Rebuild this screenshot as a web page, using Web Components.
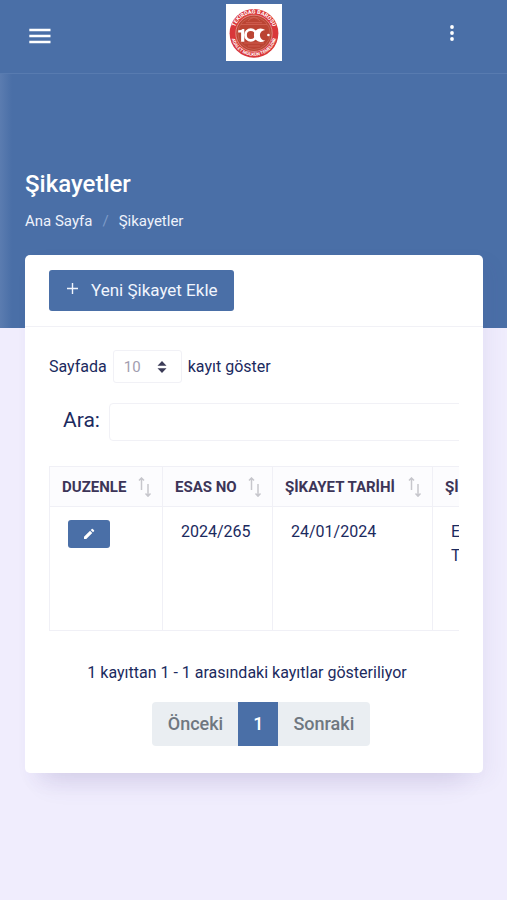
<!DOCTYPE html>
<html lang="tr">
<head>
<meta charset="utf-8">
<meta name="viewport" content="width=device-width, initial-scale=1">
<title>Şikayetler</title>
<style>
  :root { --blue: #4a6fa7; --navy: #1b2a5e; --line: #f1f1f6; --page: #f0edfd; }
  body { margin: 0; min-height: 100vh; background: var(--page); color: var(--navy);
    font: 16px/24px Roboto, "Noto Sans", sans-serif; }
</style>
</head>
<body>
<app-shell>
  <app-bar slot="bar"></app-bar>
  <page-title slot="title" heading="Şikayetler"></page-title>
  <content-card>
    <add-button slot="header">Yeni Şikayet Ekle</add-button>
    <data-controls></data-controls>
    <complaint-table></complaint-table>
    <table-pager></table-pager>
  </content-card>
</app-shell>

<script>
const define = (name, html) => {
  const template = document.createElement('template');
  template.innerHTML = '<style>:host{display:block;box-sizing:border-box}*{box-sizing:border-box}button,input,select{font:inherit;margin:0}</style>' + html;
  customElements.define(name, class extends HTMLElement {
    constructor() {
      super();
      this.attachShadow({ mode: 'open' }).append(template.content.cloneNode(true));
    }
    connectedCallback() {
      const heading = this.getAttribute('heading');
      if (heading) this.shadowRoot.querySelectorAll('[data-heading]').forEach(n => n.textContent = heading);
    }
  });
};

define('app-shell', `
<style>
  .top { background: linear-gradient(90deg, #5b7cb0, transparent 12px) 0 74px no-repeat, var(--blue); padding-bottom: 95px; }
  main { margin: -73px 24px 0 25px; }
</style>
<div class="top"><slot name="bar"></slot><slot name="title"></slot></div>
<main><slot></slot></main>`);

define('app-bar', `
<style>
  header { display: grid; grid-template-columns: 1fr auto 1fr; align-items: center; height: 74px; padding: 0 28px 8px; border-bottom: 1px solid #587bb0; }
  button { display: flex; padding: 0; border: 0; background: none; color: #fff; }
  button:last-child { justify-self: end; justify-content: center; width: 54px; }
  svg { display: block; }
  .menu { padding-top: 6px; }
</style>
<header>
  <button class="menu" aria-label="Menü"><svg width="24" height="24" viewBox="0 0 24 24" stroke="#fff" stroke-width="2.6"><path d="M1.300 6H22.500M1.300 12H22.500M1.300 18H22.500"/></svg></button>
  <svg width="56" height="57" viewBox="0 0 56 57" role="img" aria-label="Tekirdağ Barosu">
    <rect width="56" height="57" fill="#fff"/>
    <circle cx="28" cy="29.3" r="24.4" fill="#d9373a"/>
    <circle cx="28" cy="29.3" r="18.2" fill="#bb4433" stroke="#ecaaa0" stroke-width=".7"/>
    <circle cx="28" cy="29.3" r="16.2" fill="none" stroke="#d0705e" stroke-width=".6"/>
    <path d="M15 20.5h26M20 18.7h16M22 17q6-7 12 0M18 39h20M22 42h12" fill="none" stroke="#d46355" stroke-width=".8"/>
    <path id="up" d="M8.520 33.430a19.900 19.900 0 1 1 38.960 0" fill="none"/>
    <path id="down" d="M5.300 26a22.900 22.900 0 1 0 45.400 0" fill="none"/>
    <g fill="#fff" font-family="Roboto, sans-serif" font-weight="700" text-anchor="middle">
      <text font-size="5.500"><textPath href="#up" startOffset="50%">TEKİRDAĞ BAROSU</textPath></text>
      <text font-size="4.500"><textPath href="#down" startOffset="50%">ADALET MÜLKÜN TEMELİDİR</textPath></text>
    </g>
    <path d="M12.200 26.200q3.200.2 4.300-1.200h1.800v12.800h-3.200v-9.200h-2.900z" fill="#fff"/>
    <circle cx="24.800" cy="31" r="5.300" fill="none" stroke="#fff" stroke-width="2.700"/>
    <path d="M39.100 26a6.800 6.800 0 1 0 0 10.400a5.200 5.200 0 1 1 0-10.400z" fill="#fff"/>
    <circle cx="42.400" cy="31" r="1.300" fill="#fff"/>
  </svg>
  <button aria-label="Diğer seçenekler"><svg width="24" height="24" viewBox="0 0 24 24" fill="#fff"><circle cx="12" cy="6" r="1.900"/><circle cx="12" cy="12" r="1.900"/><circle cx="12" cy="18" r="1.900"/></svg></button>
</header>`);

define('page-title', `
<style>
  :host { padding: 96px 24px 0 25px; color: #fff; }
  h1 { margin: 0 0 11px; font-size: 24px; line-height: 28px; font-weight: 500; }
  ol { display: flex; gap: 10px; margin: 0; padding: 0; list-style: none; font-size: 15px; line-height: 24px; color: #eef2fb; }
  a { color: inherit; text-decoration: none; }
  .sep { color: #7e9bc8; }
</style>
<h1 data-heading></h1>
<nav aria-label="Sayfa yolu"><ol><li><a href="#">Ana Sayfa</a></li><li class="sep" aria-hidden="true">/</li><li data-heading></li></ol></nav>`);

define('content-card', `
<style>
  :host { background: #fff; border-radius: 5px; box-shadow: 0 28px 24px -20px rgba(82,63,140,.14), 8px 8px 20px rgba(82,63,140,.05); }
  header { padding: 15px 24px; border-bottom: 1px solid var(--line); }
  .body { padding: 23px 24px 27px; }
</style>
<header><slot name="header"></slot></header>
<div class="body"><slot></slot></div>`);

define('add-button', `
<style>
  button { display: flex; align-items: center; gap: 11px; padding: 0 16px 1px; height: 41px; border: 0; border-radius: 3px; background: var(--blue); color: #f1f5fd; font-size: 17px; line-height: 24px; }
  svg { display: block; margin-bottom: 3px; }
</style>
<button><svg width="15" height="15" viewBox="0 0 15 15" stroke="currentColor" stroke-width="1.4" aria-hidden="true"><path d="M7.500 2v11M2 7.500h11"/></svg><span><slot></slot></span></button>`);

define('data-controls', `
<style>
  :host { overflow: hidden; }
  .length { display: flex; align-items: center; gap: 6px; line-height: 32px; }
  .select { display: grid; align-items: center; }
  .select > * { grid-area: 1 / 1; }
  select { appearance: none; width: 69px; height: 33px; padding: 0 10px; border: 1px solid var(--line); border-radius: 3px; background: #fff; color: #a29daf; font-size: 15px; }
  svg { justify-self: end; margin-right: 15px; pointer-events: none; }
  .search { display: flex; align-items: center; gap: 9px; width: calc(100% + 40px); margin-top: 20px; padding-left: 14px; }
  .search label { padding-bottom: 4px; font-size: 21px; line-height: 32px; }
  input { flex: 1; min-width: 0; height: 38px; padding: 0 12px; border: 1px solid var(--line); border-radius: 4px; background: #fff; color: inherit; }
</style>
<div class="length"><label for="len">Sayfada</label>
  <span class="select"><select id="len" aria-label="Sayfada kayıt göster"><option>10</option></select>
  <svg width="10" height="12" viewBox="0 0 10 12" fill="#3b3b57" aria-hidden="true"><path d="M5 0l4.500 4.800h-9zM5 12L.5 7.200h9z"/></svg></span>
  <span>kayıt göster</span></div>
<div class="search"><label for="q">Ara:</label><input id="q" type="search"></div>`);

define('sort-icon', `
<style>:host{display:inline-block} svg{display:block}</style>
<svg width="14" height="20" viewBox="0 0 14 20" fill="none" stroke="#c6c6cc" stroke-width="1.500" aria-hidden="true"><path d="M3.500 13V1M1 3.600L3.500 1L6 3.600M10 7v12M7.500 16.600L10 19.200l2.500-2.600"/></svg>`);

define('complaint-table', `
<style>
  :host { margin-top: 25px; overflow-x: auto; scrollbar-width: none; }
  table { width: 580px; table-layout: fixed; border-collapse: collapse; }
  .c1 { width: 113px } .c2 { width: 110px } .c3 { width: 160px }
  th, td { border: 1px solid #f0f0f6; text-align: left; }
  th { height: 40px; padding: 0 10px 0 12px; background: #fcfcfe; color: #3c3558; font-size: 15px; line-height: 20px; font-weight: 700; white-space: nowrap; }
  th > span { display: flex; align-items: center; justify-content: space-between; }
  td { height: 124px; padding: 13px 18px; vertical-align: top; }
  button { display: grid; place-items: center; width: 42px; height: 28px; padding: 0; border: 0; border-radius: 3px; background: var(--blue); }
</style>
<table>
  <colgroup><col class="c1"><col class="c2"><col class="c3"><col></colgroup>
  <thead><tr>
    <th><span>DUZENLE<sort-icon></sort-icon></span></th>
    <th><span>ESAS NO<sort-icon></sort-icon></span></th>
    <th><span>ŞİKAYET TARİHİ<sort-icon></sort-icon></span></th>
    <th>Şİ</th>
  </tr></thead>
  <tbody><tr>
    <td><button aria-label="Düzenle"><svg width="12" height="12" viewBox="0 0 24 24" fill="#fff"><path d="M2 17.500V22h4.500L18.600 9.900l-4.500-4.500zM22 6.500a1.500 1.500 0 0 0 0-2.100l-2.400-2.400a1.500 1.500 0 0 0-2.100 0l-2 2 4.500 4.500z"/></svg></button></td>
    <td>2024/265</td>
    <td>24/01/2024</td>
    <td>E<br>T</td>
  </tr></tbody>
</table>`);

define('table-pager', `
<style>
  :host { margin-top: 30px; }
  p { margin: 0; padding-right: 14px; text-align: center; }
  nav { display: flex; justify-content: center; margin-top: 17px; padding-left: 14px; }
  button { height: 44px; padding: 0 15px; border: 0; background: #eaeef2; color: #6f7780; font-size: 18px; line-height: 24px; font-weight: 500; }
  button:first-child { padding-left: 16px; border-radius: 4px 0 0 4px; }
  button:last-child { padding-right: 16px; border-radius: 0 4px 4px 0; }
  button[aria-current] { background: var(--blue); color: #fff; }
</style>
<p role="status">1 kayıttan 1 - 1 arasındaki kayıtlar gösteriliyor</p>
<nav aria-label="Sayfalama"><button>Önceki</button><button aria-current="page">1</button><button>Sonraki</button></nav>`);
</script>
</body>
</html>
